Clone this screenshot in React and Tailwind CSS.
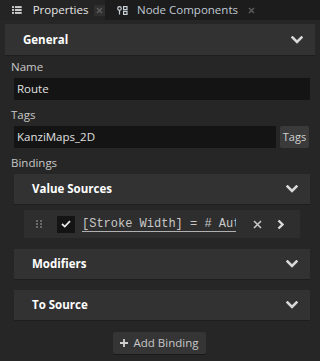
import React from "react";

const Chevron = ({ className = "" }) => (
  <svg width="12" height="8" viewBox="0 0 12 8" className={className}>
    <path d="M1.5 1.5 L6 6 L10.5 1.5" fill="none" stroke="#d8d8d8" strokeWidth="2.6" strokeLinecap="square" />
  </svg>
);

const Header = ({ title, className = "" }) => (
  <div className={`flex items-center justify-between bg-[#323232] shadow-[0_1px_0_#1e1e1e] ${className}`}>
    <span className="font-bold text-[11.5px] text-white">{title}</span>
    <Chevron />
  </div>
);

export default function App() {
  return (
    <div
      className="w-[320px] h-[361px] bg-[#262626] overflow-hidden text-[#c8c8c8]"
      style={{ fontFamily: '"Open Sans", "Noto Sans", sans-serif' }}
    >
      {/* Tab bar */}
      <div className="h-[20px] bg-[#1c1c1c] flex items-stretch">
        <div className="w-[105px] bg-[#242424] flex items-center pl-[12px]">
          <svg width="10" height="8" viewBox="0 0 10 8" className="mr-[11px]">
            <rect x="0" y="0" width="2" height="2" fill="#d0d0d0" />
            <rect x="3" y="0" width="7" height="2" fill="#d0d0d0" />
            <rect x="0" y="3" width="2" height="2" fill="#d0d0d0" />
            <rect x="3" y="3" width="7" height="2" fill="#d0d0d0" />
            <rect x="0" y="6" width="2" height="2" fill="#d0d0d0" />
            <rect x="3" y="6" width="7" height="2" fill="#d0d0d0" />
          </svg>
          <span className="text-[11.5px] text-[#e6e6e6] leading-none">Properties</span>
          <span className="ml-[6px] w-[11px] h-[11px] bg-[#2f2f2f] flex items-center justify-center">
            <svg width="7" height="7" viewBox="0 0 7 7">
              <path d="M1 1 L6 6 M6 1 L1 6" stroke="#5a5a5a" strokeWidth="1.6" />
            </svg>
          </span>
        </div>
        <div className="flex items-center pl-[12px]">
          <svg width="11" height="9" viewBox="0 0 11 9" className="mr-[9px]">
            <circle cx="2.5" cy="2.5" r="1.8" fill="none" stroke="#c8d0d8" strokeWidth="1.2" />
            <path d="M2.5 4.3 V8.5" stroke="#c8d0d8" strokeWidth="1.2" />
            <rect x="6.6" y="0.6" width="3.4" height="3" fill="none" stroke="#c8d0d8" strokeWidth="1.2" />
            <rect x="6.6" y="5.4" width="3.4" height="3" fill="none" stroke="#c8d0d8" strokeWidth="1.2" />
          </svg>
          <span className="text-[11.5px] text-[#c0cad4] leading-none">Node Components</span>
          <svg width="7" height="7" viewBox="0 0 7 7" className="ml-[10px]">
            <path d="M1 1 L6 6 M6 1 L1 6" stroke="#5a5a5a" strokeWidth="1.6" />
          </svg>
        </div>
      </div>

      {/* Content */}
      <div className="px-[5px] pt-[4px]">
        <Header title="General" className="h-[31px] pl-[18px] pr-[12px]" />

        <div className="pl-[6px] pr-[5px]">
          <div className="h-[20px] mt-[2px] leading-[20px] text-[11.5px] text-[#c8c8c8]">Name</div>
          <div className="ml-[3px] mt-[1px] h-[22px] bg-[#141414] flex items-center pl-[3px] text-[11.5px] text-[#e0e0e0]">
            Route
          </div>

          <div className="h-[20px] mt-[5px] leading-[20px] text-[11.5px] text-[#c8c8c8]">Tags</div>
          <div className="ml-[3px] mt-[1px] flex gap-[4px] items-stretch">
            <div className="w-[262px] h-[22px] bg-[#141414] flex items-center pl-[3px] text-[11.5px] text-[#e0e0e0]">
              KanziMaps_2D
            </div>
            <div className="w-[29px] h-[22px] bg-[#3a3a3a] rounded-[2px] flex items-center justify-center text-[11px] text-[#d0d0d0]">
              Tags
            </div>
          </div>

          <div className="h-[20px] mt-[5px] leading-[20px] text-[11.5px] text-[#c8c8c8]">Bindings</div>

          <div className="ml-[3px] mt-[1px]">
            <Header title="Value Sources" className="h-[30px] pl-[18px] pr-[12px]" />

            <div className="mx-[10px] mt-[6px] h-[28px] bg-[#2e2e2e] flex items-center">
              <svg width="6" height="8" viewBox="0 0 6 8" className="ml-[12px]">
                <rect x="0" y="0" width="2" height="2" fill="#6a6a6a" />
                <rect x="4" y="0" width="2" height="2" fill="#6a6a6a" />
                <rect x="0" y="3" width="2" height="2" fill="#6a6a6a" />
                <rect x="4" y="3" width="2" height="2" fill="#6a6a6a" />
                <rect x="0" y="6" width="2" height="2" fill="#6a6a6a" />
                <rect x="4" y="6" width="2" height="2" fill="#6a6a6a" />
              </svg>
              <div className="ml-[15px] w-[18px] h-[17px] bg-[#141414] flex items-center justify-center">
                <svg width="10" height="8" viewBox="0 0 10 8">
                  <path d="M1 4 L3.8 6.6 L9 1.2" fill="none" stroke="#e8e8e8" strokeWidth="1.8" />
                </svg>
              </div>
              <div
                className="ml-[7px] w-[154px] overflow-hidden whitespace-nowrap text-[12px] text-[#c8c8c8] underline underline-offset-[4px] decoration-[#b0b0b0]"
                style={{ fontFamily: '"Liberation Mono", monospace' }}
              >
                [Stroke Width] = # Auto
              </div>
              <svg width="9" height="9" viewBox="0 0 9 9" className="ml-[17px]">
                <path d="M1 1 L8 8 M8 1 L1 8" stroke="#c8c8c8" strokeWidth="1.6" />
              </svg>
              <svg width="7" height="11" viewBox="0 0 7 11" className="ml-[15px]">
                <path d="M1.5 1.5 L5.5 5.5 L1.5 9.5" fill="none" stroke="#d8d8d8" strokeWidth="2.4" />
              </svg>
            </div>

            <Header title="Modifiers" className="mt-[11px] h-[30px] pl-[18px] pr-[12px]" />
            <Header title="To Source" className="mt-[11px] h-[30px] pl-[18px] pr-[12px]" />
          </div>

          <div className="flex justify-center mt-[12px]">
            <div className="mr-[3px] w-[93px] h-[22px] bg-[#353535] rounded-[2px] shadow-[0_1px_0_#1a1a1a] flex items-center justify-center gap-[6px] text-[11.5px] text-[#c8c8c8]">
              <svg width="8" height="8" viewBox="0 0 8 8">
                <path d="M4 0 V8 M0 4 H8" stroke="#d0d0d0" strokeWidth="1.8" />
              </svg>
              <span>Add Binding</span>
            </div>
          </div>
        </div>
      </div>
    </div>
  );
}
